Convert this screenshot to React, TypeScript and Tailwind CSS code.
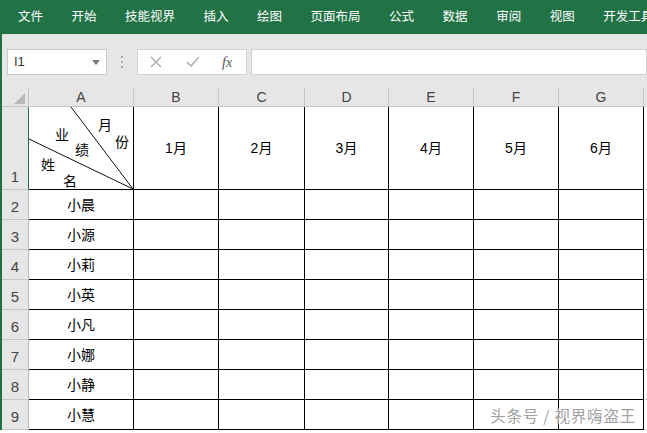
import React from 'react';

const tabs = ['文件', '开始', '技能视界', '插入', '绘图', '页面布局', '公式', '数据', '审阅', '视图', '开发工具'];
const cols = ['A', 'B', 'C', 'D', 'E', 'F', 'G'];
const months = ['1月', '2月', '3月', '4月', '5月', '6月'];
const names = ['小晨', '小源', '小莉', '小英', '小凡', '小娜', '小静', '小慧'];

const font = { fontFamily: '"Liberation Sans", "Noto Sans CJK SC", sans-serif' };

const DiagonalCell: React.FC = () => (
  <div className="relative h-full border-r border-b border-black bg-white text-[14px] text-black">
    <svg className="absolute inset-0 h-full w-full" viewBox="0 0 104 82" preserveAspectRatio="none">
      <line x1="42" y1="0" x2="104" y2="82" stroke="#111" strokeWidth="1" />
      <line x1="0" y1="32" x2="104" y2="82" stroke="#111" strokeWidth="1" />
    </svg>
    <span className="absolute left-[26px] top-[18px]">业</span>
    <span className="absolute left-[46px] top-[33px]">绩</span>
    <span className="absolute left-[69px] top-[8px]">月</span>
    <span className="absolute left-[86px] top-[25px]">份</span>
    <span className="absolute left-[12px] top-[48px]">姓</span>
    <span className="absolute left-[34px] top-[64px]">名</span>
  </div>
);

const App: React.FC = () => {
  return (
    <div className="relative h-[433px] w-[647px] overflow-hidden bg-white" style={font}>
      {/* ribbon tabs */}
      <div className="flex h-[34px] items-center gap-[28.5px] overflow-hidden bg-[#217346] pl-[18px] text-[12.5px] text-white whitespace-nowrap">
        {tabs.map(t => (
          <span key={t} className="shrink-0">{t}</span>
        ))}
      </div>

      <div className="border-l-[2px] border-[#217346]">
        {/* formula bar */}
        <div className="flex h-[54px] items-center bg-[#e6e6e6] pl-[5px] pt-[2px]">
          <div className="flex h-[26px] w-[100px] items-center justify-between border border-[#c8c8c8] bg-white pl-[6px] pr-[6px] text-[13px] text-[#333]">
            <span>I1</span>
            <svg width="8" height="5" viewBox="0 0 8 5"><path d="M0 0h8L4 5z" fill="#777" /></svg>
          </div>
          <div className="mx-[14px] flex flex-col gap-[3px]">
            <span className="h-[2px] w-[2px] bg-[#aaa]" />
            <span className="h-[2px] w-[2px] bg-[#aaa]" />
            <span className="h-[2px] w-[2px] bg-[#aaa]" />
          </div>
          <div className="flex h-[26px] w-[110px] items-center border border-[#d4d4d4] bg-white pl-[12px]">
            <svg width="12" height="12" viewBox="0 0 12 12"><path d="M1 1l10 10M11 1L1 11" stroke="#a8a8a8" strokeWidth="1.3" /></svg>
            <svg className="ml-[24px]" width="14" height="12" viewBox="0 0 14 12"><path d="M1 6l4 4L13 1" stroke="#a8a8a8" strokeWidth="1.4" fill="none" /></svg>
            <span className="ml-[22px] text-[14px] italic text-[#555]" style={{ fontFamily: '"Liberation Serif", serif' }}>fx</span>
          </div>
          <div className="ml-[4px] h-[26px] flex-1 border border-[#d4d4d4] bg-white" />
        </div>

        {/* sheet */}
        <div className="grid grid-cols-[27px_105px_85px_86px_84px_85px_85px_85px_1fr] grid-rows-[19px_83px_repeat(8,30px)] text-[14px]">
          {/* header row */}
          <div className="relative border-r border-b border-[#c6c6c6] bg-[#e6e6e6]">
            <svg className="absolute bottom-[2px] right-[3px]" width="11" height="11" viewBox="0 0 11 11"><path d="M11 0v11H0z" fill="#b8b8b8" /></svg>
          </div>
          {cols.map(c => (
            <div key={c} className="flex items-center justify-center border-r border-b border-[#c6c6c6] bg-[#e6e6e6] text-[#444]">
              {c}
            </div>
          ))}
          <div className="border-b border-[#c6c6c6] bg-[#e6e6e6]" />

          {/* row 1 */}
          <div className="flex items-end justify-center border-r border-b border-r-[#217346] border-b-[#c6c6c6] bg-[#e6e6e6] pb-[1px] text-[15px] text-[#444]">1</div>
          <DiagonalCell />
          {months.map(m => (
            <div key={m} className="flex items-center justify-center border-r border-b border-black text-black">
              {m}
            </div>
          ))}
          <div className="border-b border-[#d8d8d8]" />

          {/* rows 2-9 */}
          {names.map((n, i) => (
            <React.Fragment key={n}>
              <div className="flex items-end justify-center border-r border-b border-r-[#a9bfb0] border-b-[#c6c6c6] bg-[#e6e6e6] pb-[1px] text-[15px] text-[#444]">
                {i + 2}
              </div>
              <div className="flex items-center justify-center border-r border-b border-black pt-[1px] text-black">{n}</div>
              {months.map(m => (
                <div key={m} className="border-r border-b border-black" />
              ))}
              <div className="border-b border-[#d8d8d8]" />
            </React.Fragment>
          ))}
        </div>
      </div>

      {/* watermark */}
      <div
        className="absolute bottom-[6px] right-[11px] text-[15.5px] tracking-[0.8px] text-[#a0a0a0]"
        style={{ fontFamily: '"Noto Sans CJK SC", sans-serif', textShadow: '0 0 2px #fff, 0 0 2px #fff' }}
      >
        头条号 / 视界嗨盗王
      </div>
    </div>
  );
};

export default App;
